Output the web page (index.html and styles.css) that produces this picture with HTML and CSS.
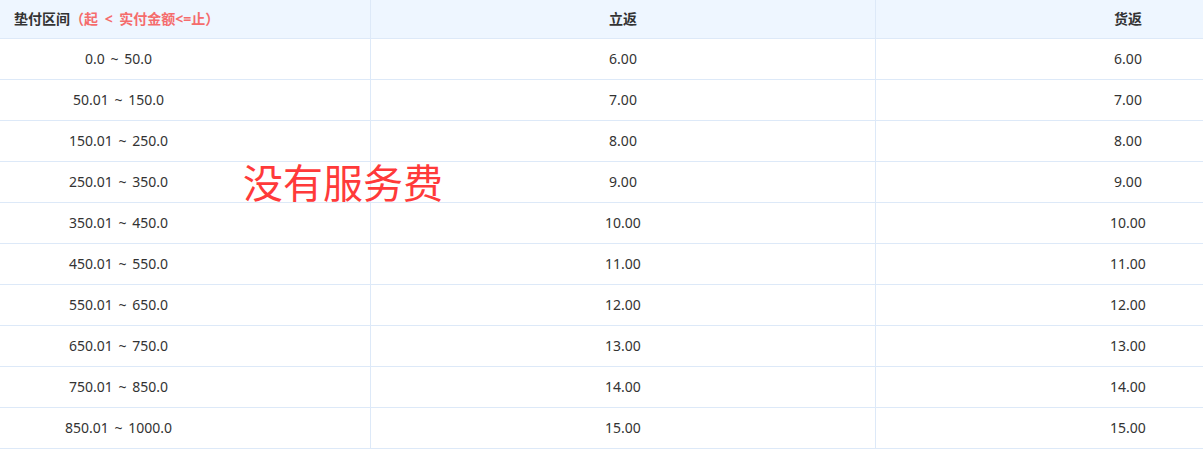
FILE: index.html
```html
<!DOCTYPE html>
<html lang="zh">
<head>
<meta charset="utf-8">
<link rel="stylesheet" href="styles.css">
</head>
<body>
<div class="wrap">
  <div class="table">
    <div class="row head">
      <div class="cell c1"><span class="hd">垫付区间</span><span class="note">（起 &lt; 实付金额&lt;=止）</span></div>
      <div class="cell c2">立返</div>
      <div class="cell c3">货返</div>
    </div>
    <div class="row"><div class="cell c1"><span class="rng">0.0 ~ 50.0</span></div><div class="cell c2">6.00</div><div class="cell c3">6.00</div></div>
    <div class="row"><div class="cell c1"><span class="rng">50.01 ~ 150.0</span></div><div class="cell c2">7.00</div><div class="cell c3">7.00</div></div>
    <div class="row"><div class="cell c1"><span class="rng">150.01 ~ 250.0</span></div><div class="cell c2">8.00</div><div class="cell c3">8.00</div></div>
    <div class="row"><div class="cell c1"><span class="rng">250.01 ~ 350.0</span></div><div class="cell c2">9.00</div><div class="cell c3">9.00</div></div>
    <div class="row"><div class="cell c1"><span class="rng">350.01 ~ 450.0</span></div><div class="cell c2">10.00</div><div class="cell c3">10.00</div></div>
    <div class="row"><div class="cell c1"><span class="rng">450.01 ~ 550.0</span></div><div class="cell c2">11.00</div><div class="cell c3">11.00</div></div>
    <div class="row"><div class="cell c1"><span class="rng">550.01 ~ 650.0</span></div><div class="cell c2">12.00</div><div class="cell c3">12.00</div></div>
    <div class="row"><div class="cell c1"><span class="rng">650.01 ~ 750.0</span></div><div class="cell c2">13.00</div><div class="cell c3">13.00</div></div>
    <div class="row"><div class="cell c1"><span class="rng">750.01 ~ 850.0</span></div><div class="cell c2">14.00</div><div class="cell c3">14.00</div></div>
    <div class="row"><div class="cell c1"><span class="rng">850.01 ~ 1000.0</span></div><div class="cell c2">15.00</div><div class="cell c3">15.00</div></div>
  </div>
  <div class="stamp">没有服务费</div>
</div>
</body>
</html>
```
FILE: styles.css
```css
html, body {
  margin: 0;
  padding: 0;
  background: #fff;
  overflow: hidden;
}
body {
  font-family: "Noto Sans", "Noto Sans CJK SC", sans-serif;
  color: #333;
}
.wrap {
  position: relative;
  width: 1203px;
  height: 450px;
  overflow: hidden;
}
.table {
  width: 1380px;
}
.row {
  display: flex;
  height: 40px;
  border-bottom: 1px solid #dde9f8;
}
.row.head {
  height: 38px;
  background: #eef6ff;
  font-weight: bold;
}
.cell {
  display: flex;
  align-items: center;
  justify-content: center;
  font-size: 14px;
  padding-bottom: 2px;
  border-right: 1px solid #dde9f8;
  box-sizing: border-box;
}
.c1 { width: 371px; justify-content: flex-start; }
.c2 { width: 505px; }
.c3 { width: 504px; border-right: none; }
.row.head .c1 { padding-left: 14px; }
.note {
  color: #f56c6c;
  word-spacing: 3px;
}
.rng {
  display: block;
  width: 237px;
  text-align: center;
  word-spacing: 2px;
}
.stamp {
  position: absolute;
  left: 243px;
  top: 154px;
  font-family: "Noto Sans CJK SC", sans-serif;
  font-size: 40px;
  line-height: 54px;
  color: #ff3a3a;
}
```
